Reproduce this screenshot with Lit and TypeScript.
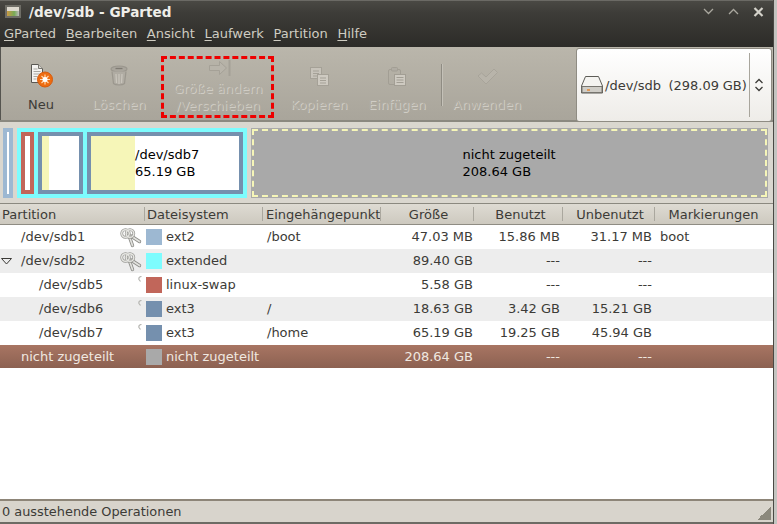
import { LitElement, html, css, svg } from "lit";
import { customElement } from "lit/decorators.js";

const rows = [
  { n: "/dev/sdb1", indent: 21, key: "big", c: "#9db8d2", fs: "ext2", m: "/boot", s: "47.03 MB", u: "15.86 MB", f: "31.17 MB", fl: "boot", cls: "" },
  { n: "/dev/sdb2", indent: 21, key: "big", c: "#7dfcfe", fs: "extended", m: "", s: "89.40 GB", u: "---", f: "---", fl: "", cls: "alt", tri: true },
  { n: "/dev/sdb5", indent: 39, key: "small", c: "#c1665a", fs: "linux-swap", m: "", s: "5.58 GB", u: "---", f: "---", fl: "", cls: "" },
  { n: "/dev/sdb6", indent: 39, key: "small", c: "#7590ae", fs: "ext3", m: "/", s: "18.63 GB", u: "3.42 GB", f: "15.21 GB", fl: "", cls: "alt" },
  { n: "/dev/sdb7", indent: 39, key: "small", c: "#7590ae", fs: "ext3", m: "/home", s: "65.19 GB", u: "19.25 GB", f: "45.94 GB", fl: "", cls: "" },
  { n: "nicht zugeteilt", indent: 21, key: "", c: "#a9a9a9", fs: "nicht zugeteilt", m: "", s: "208.64 GB", u: "---", f: "---", fl: "", cls: "sel" },
];

const keyIcon = svg`<svg width="22" height="20" viewBox="0 0 22 20"><g fill="none" stroke-linecap="round">
<path d="M9.500 9 L12.500 17.500 M11 8 L19.500 13.500" stroke="#8c8c88" stroke-width="3.400"/>
<path d="M9.500 9 L12.500 17.500 M11 8 L19.500 13.500" stroke="#e2e2de" stroke-width="1.700"/>
<circle cx="5.500" cy="5.500" r="3.800" stroke="#9a9a96" stroke-width="2.800"/>
<circle cx="10" cy="5.500" r="3.800" stroke="#9a9a96" stroke-width="2.800"/>
<circle cx="5.500" cy="5.500" r="3.800" stroke="#e6e6e2" stroke-width="1.400"/>
<circle cx="10" cy="5.500" r="3.800" stroke="#e6e6e2" stroke-width="1.400"/></g></svg>`;

const smallKey = svg`<svg width="4" height="6" viewBox="0 0 4 6"><path d="M3.500 .5C1.500 .5 .5 2 1 3.500L2.500 5.500" fill="none" stroke="#b4b4b0" stroke-width="1.200"/></svg>`;

const icons: Record<string, unknown> = {
  neu: svg`<svg width="23" height="24" viewBox="0 0 23 24">
    <path d="M1.500 .5h7l4 4v14h-11z" fill="#f4f3f0" stroke="#5a5853"/>
    <path d="M8.500 .5v4h4" fill="#d8d6d0" stroke="#77756f"/>
    <path d="M3.500 5h4M3.500 7.500h7M3.500 10h7M3.500 12.500h4M3.500 15h3" stroke="#a9a7a2"/>
    <circle cx="15" cy="15.500" r="7.500" fill="#ee6c10" stroke="#d65a0a"/>
    <path d="M15 10.500v10M10 15.500h10M11.500 12l7 7M18.500 12l-7 7" stroke="#ffd9b0" stroke-width="1.200"/>
    <circle cx="15" cy="15.500" r="2.500" fill="#fff"/></svg>`,
  del: svg`<svg width="18" height="21" viewBox="0 0 18 21" fill="none" stroke="#9b978e">
    <ellipse cx="9" cy="4" rx="8" ry="3" fill="#aaa69d" stroke-width="1.200"/>
    <path d="M2 6.500l1.500 12c2 2 9 2 11 0l1.500-12" fill="#b0aca3" stroke-width="1.200"/>
    <path d="M6 9l.5 9M9 9v10M12 9l-.5 9" stroke="#c9c5bc" stroke-width="1.300"/>
    <path d="M5.500 3.500h7" stroke="#7f7b73" stroke-width="1.300"/></svg>`,
  res: svg`<svg class="resic" width="22" height="16" viewBox="0 0 22 16" fill="#b8b4aa" stroke="#a5a197">
    <path d="M.5 5.500h10V1.500l7 6.500-7 6.500v-4h-10z"/><path d="M20.500 0v16" fill="none" stroke-width="2"/></svg>`,
  copy: svg`<svg width="19" height="19" viewBox="0 0 19 19" fill="#c7c3ba" stroke="#a5a197">
    <rect x=".5" y=".5" width="11" height="11"/><path d="M3 4h6M3 6.500h6M3 9h6"/>
    <rect x="7.500" y="7.500" width="11" height="11" fill="#cecac1"/><path d="M10 11h6M10 13.500h6M10 16h6"/></svg>`,
  paste: svg`<svg width="18" height="19" viewBox="0 0 18 19" fill="#c0bcb3" stroke="#a29e94">
    <rect x=".5" y="2.500" width="12" height="15" rx="1.500" fill="none"/>
    <rect x="3.500" y=".5" width="6" height="3.500" rx="1" fill="#b0aca3"/>
    <rect x="6.500" y="7.500" width="11" height="11" fill="#cecac1"/><path d="M8.500 10.500h7M8.500 13h7M8.500 15.500h7"/></svg>`,
  ok: svg`<svg width="21" height="18" viewBox="0 0 21 18"><path d="M1 8l3.500-3L9 9l8-8 3.500 3.500L9 16z" fill="#b8b4aa" stroke="#a8a49a"/></svg>`,
};

@customElement("app-root")
export class AppRoot extends LitElement {
  static styles = css`
    :host { display: block; width: 777px; height: 524px; overflow: hidden; background: #3b3a36; font-family: "DejaVu Sans", sans-serif; font-size: 13px; color: #3c3b37; }
    * { box-sizing: border-box; }
    .win { display: flex; height: 524px; }
    .main { width: 773px; flex: none; display: flex; flex-direction: column; }
    .side { flex: 1; background: #c4c4c0; border-left: 1px solid #4a4944; }
    .head { height: 47px; flex: none; background: linear-gradient(#4a4944, #3d3c38 12px, #2c2b28); border-top: 1px solid #6b6a65; display: flex; flex-direction: column; }
    .title { height: 21px; display: flex; align-items: center; padding-left: 5px; color: #efeee9; font-weight: bold; font-size: 13.600px; gap: 8px; flex: none; }
    .ticon { width: 16px; height: 13px; background: #ddd9cf; border: 2px solid #6e6d66; display: flex; align-items: flex-end; }
    .ticon i { display: block; width: 100%; height: 5px; background: linear-gradient(90deg,#c94,#7a5 60%,#bbb); }
    .sp { flex: 1; }
    .ctl { display: flex; align-items: center; height: 19px; padding-right: 2px; }
    .ctl span { width: 25px; display: flex; justify-content: center; }
    .menu { display: flex; height: 25px; align-items: center; padding: 0 0 2px 4px; gap: 9.700px; color: #cfccc2; }
    .menu u { text-underline-offset: 2px; }
    .tools { height: 75px; flex: none; display: flex; background: linear-gradient(#bab6ab, #a9a59b); border-bottom: 2px solid #8b8980; position: relative; padding-left: 2px; box-shadow: inset 1px 0 0 #55544f; }
    .tb { width: 78px; flex: none; display: flex; flex-direction: column; align-items: center; height: 73px; color: #b0aca2; text-shadow: 1px 1px 0 #d0cdc5; line-height: 17px; text-align: center; white-space: nowrap; }
    .tb .ic { height: 42px; display: flex; align-items: flex-end; justify-content: center; padding-bottom: 3px; flex: none; }
    .tb.on { color: #3c3b37; text-shadow: none; }
    .tb.on .ic { padding-bottom: 1px; }
    .tb.res { width: 118px; margin: 0 3px 0 1px; }
    .tb.res .ic { height: 30px; padding: 0 0 1px 3px; }
    .tb .lb { margin-top: 7px; }
    .tb.res .lb { margin-top: 3px; }
    .dash { position: absolute; left: 161px; top: 9px; width: 113px; height: 62px; border: 3px dashed #ee0000; pointer-events: none; }
    .vsep { width: 1px; height: 42px; background: #8f8c83; margin: 17px 6px 0 5px; flex: none; box-shadow: 1px 0 0 #c4c1b8; }
    .drive { position: absolute; left: 576px; top: 1px; width: 196px; height: 74px; background: linear-gradient(#fff, #eeece8); border: 1px solid #8f8c83; border-radius: 3px; display: flex; align-items: center; color: #3c3b37; padding-left: 4px; white-space: pre; word-spacing: -0.4px; }
    .drive .d { margin-right: 2px; display: flex; }
    .drive .sepv { position: absolute; left: 172px; top: 4px; bottom: 4px; width: 1px; background: #a8a59c; }
    .drive .updn { position: absolute; left: 177px; top: 29px; display: flex; }
    .bar { height: 81px; flex: none; background: #dad7cf; display: flex; padding: 6px 0 0 3px; gap: 4px; }
    .p1 { width: 10px; height: 70px; flex: none; border: 4px solid #9db8d2; background: #fff; }
    .ext { width: 230px; flex: none; height: 70px; background: #7dfcfe; display: flex; padding: 4px; gap: 4px; }
    .in { height: 62px; border: 4px solid #7590ae; background: #fff; display: flex; flex: none; color: #000; }
    .used { background: #f6f6b8; flex: none; height: 100%; }
    .txt { line-height: 17px; color: #000; align-self: center; white-space: nowrap; }
    .free { width: 517px; height: 70px; flex: none; background: #a9a9a9; outline: 2px dashed #f6f6b8; outline-offset: -3px; display: flex; align-items: center; justify-content: center; color: #000; }
    .freebox { width: 94px; }
    .thead { height: 22px; flex: none; display: flex; background: linear-gradient(#dedbd3, #cdc9bf); border-top: 1px solid #8b8980; border-bottom: 1px solid #8f8c83; align-items: center; color: #3c3b37; }
    .th { height: 100%; display: flex; align-items: center; padding: 0 2px; flex: none; white-space: nowrap; position: relative; }
    .th + .th::before { content: ""; position: absolute; left: 0; top: 3px; bottom: 3px; width: 1px; background: #aaa79e; }
    .th.c { justify-content: center; }
    .list { flex: 1; background: #fff; min-height: 0; }
    .row { height: 24px; display: flex; align-items: center; white-space: nowrap; }
    .alt { background: #ededed; }
    .sel { background: linear-gradient(#a87563, #8c6151 23px, #fff 23px); color: #f0e8e0; }
    .cell { flex: none; height: 100%; display: flex; align-items: center; position: relative; }
    .t { padding-bottom: 2px; }
    .r { justify-content: flex-end; }
    .tri { position: absolute; left: 1px; top: 9px; }
    .keyb { position: absolute; left: 120px; top: 3px; display: flex; }
    .keys { position: absolute; left: 138px; top: 3px; display: flex; }
    .sw { width: 16px; height: 16px; margin-right: 4px; flex: none; }
    .status { height: 23px; flex: none; background: #d8d4cc; border-top: 2px solid #8d8578; display: flex; align-items: center; padding: 0 0 1px 2px; position: relative; font-size: 12.900px; }
    .grip { position: absolute; right: 2px; bottom: 2px; width: 14px; height: 14px; background: linear-gradient(135deg, transparent 50%, #8b887c 50%); }
    .foot { height: 2px; flex: none; background: #6d6b64; }
  `;

  private tb(icon: unknown, label: unknown, cls = "") {
    return html`<div class="tb ${cls}"><div class="ic">${icon}</div><div class="lb">${label}</div></div>`;
  }

  render() {
    const widths = [144, 118, 118, 93, 89, 92, 119];
    const pads = [2, 3, 4, 6, 8, 6, 2];
    const heads = ["Partition", "Dateisystem", "Eingehängepunkt", "Größe", "Benutzt", "Unbenutzt", "Markierungen"];
    return html`<div class="win">
      <div class="main">
        <div class="head">
          <div class="title"><span class="ticon"><i></i></span><span>/dev/sdb - GParted</span><span class="sp"></span>
            <span class="ctl">
              <span><svg width="11" height="7" viewBox="0 0 11 7"><path d="M1 1l4.500 4.500L10 1" fill="none" stroke="#aaa89f" stroke-width="1.300"/></svg></span>
              <span><svg width="11" height="7" viewBox="0 0 11 7"><path d="M1 6l4.500-4.500L10 6" fill="none" stroke="#aaa89f" stroke-width="1.300"/></svg></span>
              <span><svg width="11" height="10" viewBox="0 0 11 10"><path d="M1.500 1l8 8M9.500 1l-8 8" fill="none" stroke="#d4d2ca" stroke-width="2.200"/></svg></span>
            </span>
          </div>
          <div class="menu">
            <span><u>G</u>Parted</span><span><u>B</u>earbeiten</span><span><u>A</u>nsicht</span><span><u>L</u>aufwerk</span><span><u>P</u>artition</span><span><u>H</u>ilfe</span>
          </div>
        </div>
        <div class="tools">
          ${this.tb(icons.neu, "Neu", "on")}
          ${this.tb(icons.del, "Löschen")}
          ${this.tb(icons.res, html`Größe ändern<br />/Verschieben`, "res")}
          ${this.tb(icons.copy, "Kopieren")}
          ${this.tb(icons.paste, "Einfügen")}
          <div class="vsep"></div>
          ${this.tb(icons.ok, "Anwenden")}
          <div class="dash"></div>
          <div class="drive">
            <span class="d"><svg width="22" height="20" viewBox="0 0 22 20">
              <path d="M4.500 1.500h13L21.500 11v7h-21v-7z" fill="#f4f3f0" stroke="#5d5c57"/>
              <path d="M1 11.500h20v6H1z" fill="#cfcdc7" stroke="#77756f"/>
              <path d="M6 15h3" stroke="#e9842a" stroke-width="1.400"/></svg></span><span>/dev/sdb  (298.09 GB)</span>
            <span class="sepv"></span>
            <span class="updn"><svg width="10" height="14" viewBox="0 0 10 14"><path d="M1.500 5L5 1.500 8.500 5M1.500 9L5 12.500 8.500 9" fill="none" stroke="#3c3b37" stroke-width="1.300"/></svg></span>
          </div>
        </div>
        <div class="bar">
          <div class="p1"></div>
          <div class="ext">
            <div class="in" style="width:13px;border-color:#c1665a"></div>
            <div class="in" style="width:45px"><div class="used" style="width:7px"></div></div>
            <div class="in" style="width:156px"><div class="used" style="width:44px"></div><div class="txt">/dev/sdb7<br />65.19 GB</div></div>
          </div>
          <div class="free"><div class="txt freebox">nicht zugeteilt<br />208.64 GB</div></div>
        </div>
        <div class="thead">
          ${heads.map((h, i) => html`<div class="th ${i >= 3 ? "c" : ""}" style="width:${widths[i]}px;padding-left:${pads[i]}px">${h}</div>`)}
        </div>
        <div class="list">
          ${rows.map(
            (r) => html`<div class="row ${r.cls}">
              <div class="cell" style="width:144px;padding-left:${r.indent}px">
                ${r.tri ? html`<svg class="tri" width="11" height="7" viewBox="0 0 11 7"><path d="M.5.500h10L5.500 6z" fill="none" stroke="#3c3b37"/></svg>` : ""}
                <span class="t">${r.n}</span>
                ${r.key === "big" ? html`<span class="keyb">${keyIcon}</span>` : r.key === "small" ? html`<span class="keys">${smallKey}</span>` : ""}
              </div>
              <div class="cell" style="width:118px;padding-left:2px"><span class="sw" style="background:${r.c}"></span><span class="t">${r.fs}</span></div>
              <div class="cell" style="width:121px;padding-left:5px"><span class="t">${r.m}</span></div>
              <div class="cell r" style="width:90px"><span class="t">${r.s}</span></div>
              <div class="cell r" style="width:87px"><span class="t">${r.u}</span></div>
              <div class="cell r" style="width:92px"><span class="t">${r.f}</span></div>
              <div class="cell" style="padding-left:8px"><span class="t">${r.fl}</span></div>
            </div>`
          )}
        </div>
        <div class="status">0 ausstehende Operationen<span class="grip"></span></div>
        <div class="foot"></div>
      </div>
      <div class="side"></div>
    </div>`;
  }
}
